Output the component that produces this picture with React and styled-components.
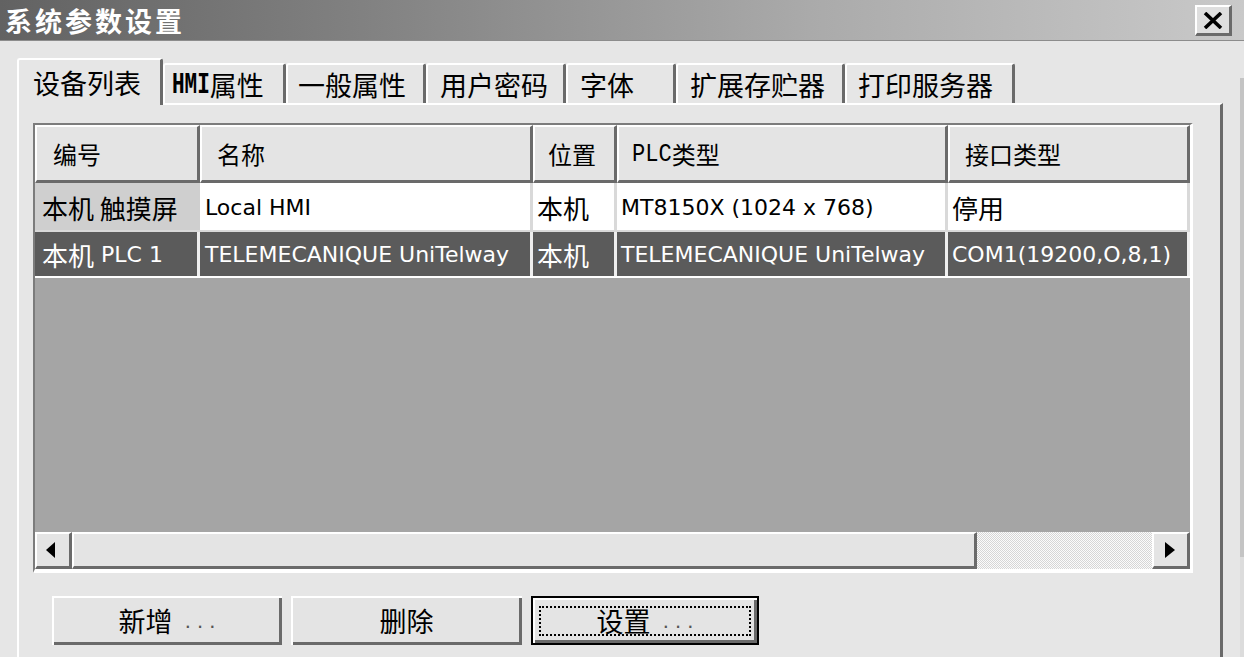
import React from 'react';
import styled, { createGlobalStyle } from 'styled-components';

const GlobalStyle = createGlobalStyle`
  html, body { margin: 0; padding: 0; background: #e6e6e6; overflow: hidden; }
  #root { width: 1244px; height: 657px; }
`;

const CJK = `"Noto Sans CJK SC", sans-serif`;
const LATIN = `"DejaVu Sans", "Noto Sans CJK SC", sans-serif`;
const MONO = `"Liberation Mono", "Noto Sans CJK SC", monospace`;

const Window = styled.div`
  width: 1244px;
  height: 657px;
  display: flex;
  flex-direction: column;
  background: #e6e6e6;
  overflow: hidden;
  font-family: ${LATIN};
  color: #000;
`;

const TitleBar = styled.div`
  box-sizing: border-box;
  height: 41px;
  flex: none;
  display: flex;
  align-items: center;
  justify-content: space-between;
  padding: 0 12px 0 5px;
  background: linear-gradient(to right, #626262 0%, #828282 30%, #aaaaaa 65%, #c9c9c9 100%);
  box-shadow: inset 0 -1px 0 #8c8c8c;
`;

const Title = styled.div`
  font-family: ${CJK};
  font-weight: 700;
  font-size: 27px;
  letter-spacing: 3px;
  line-height: 39px;
  color: #fff;
`;

const CloseButton = styled.div`
  box-sizing: border-box;
  width: 37px;
  height: 31px;
  display: flex;
  align-items: center;
  justify-content: center;
  background: #dedede;
  border-top: 2px solid #fff;
  border-left: 2px solid #fff;
  border-right: 3px solid #6a6a6a;
  border-bottom: 3px solid #6a6a6a;
`;

const Main = styled.div`
  flex: 1;
  display: flex;
  min-height: 0;
`;

const Content = styled.div`
  flex: 1;
  padding: 17px 17px 0 17px;
  display: flex;
  flex-direction: column;
`;

const RightEdge = styled.div`
  width: 4px;
  flex: none;
  background: linear-gradient(to bottom, #e6e6e6 0 37px, #c4c4c4 37px 516px, #dcdcdc 516px);
`;

const TabRow = styled.div`
  height: 45px;
  flex: none;
  display: flex;
  align-items: flex-end;
`;

const Tab = styled.div`
  box-sizing: border-box;
  width: ${p => p.$w}px;
  height: ${p => (p.$active ? 47 : 40)}px;
  margin-bottom: ${p => (p.$active ? -2 : 0)}px;
  padding-left: ${p => p.$pad}px;
  padding-top: ${p => (p.$active ? 7 : 4)}px;
  display: flex;
  align-items: flex-start;
  background: #e6e6e6;
  border-top: 2px solid #fff;
  border-left: 2px solid #fff;
  border-right: 3px solid #6a6a6a;
  border-radius: 3px 3px 0 0;
  position: relative;
  z-index: ${p => (p.$active ? 2 : 1)};
  font-family: ${CJK};
  font-size: 27px;
  line-height: 32px;
  white-space: nowrap;
`;

/* Condensed bitmap-like Latin (e.g. "HMI", "PLC") next to CJK text */
const Narrow = styled.span`
  display: inline-block;
  font-family: ${MONO};
  font-size: ${p => p.$size}px;
  font-weight: ${p => p.$weight || 400};
  transform: scaleX(${p => p.$scale});
  transform-origin: left center;
  margin-right: ${p => -(p.$size * 0.6 * p.$chars * (1 - p.$scale)).toFixed(1)}px;
`;

const Panel = styled.div`
  box-sizing: border-box;
  height: 620px;
  flex: none;
  border-top: 2px solid #fff;
  border-left: 2px solid #fff;
  border-right: 3px solid #6a6a6a;
  padding: 18px 0 0 14px;
  background: #e6e6e6;
`;

const List = styled.div`
  box-sizing: border-box;
  width: 1160px;
  height: 450px;
  display: flex;
  flex-direction: column;
  border-top: 2px solid #7c7c7c;
  border-left: 2px solid #7c7c7c;
  border-right: 3px solid #fff;
  border-bottom: 4px solid #fff;
  background: #a5a5a5;
`;

const COLS = [
  { w: 165, head: '编号', hpad: 16, pad: 7 },
  { w: 333, head: '名称', hpad: 15, pad: 5 },
  { w: 84, head: '位置', hpad: 13, pad: 4 },
  {
    w: 331,
    head: [<Narrow key="p" $size={26} $scale={0.85} $chars={3}>PLC</Narrow>, '类型'],
    hpad: 13,
    pad: 4,
  },
  { w: 242, head: '接口类型', hpad: 15, pad: 4 },
];
const GRID = COLS.map(c => `${c.w}px`).join(' ');

const HeaderRow = styled.div`
  display: grid;
  grid-template-columns: ${GRID};
  height: 58px;
  flex: none;
`;

const HeadCell = styled.div`
  box-sizing: border-box;
  display: flex;
  align-items: center;
  padding-left: ${p => p.$pad}px;
  background: #e4e4e4;
  border-top: 2px solid #fff;
  border-left: 2px solid #fff;
  border-right: 3px solid #6a6a6a;
  border-bottom: 3px solid #6a6a6a;
  font-family: ${CJK};
  font-size: 24px;
  line-height: 30px;
  white-space: nowrap;
  overflow: hidden;
`;

const TONES = {
  fixed: { bg: '#cfcfcf', fg: '#000', line: '#cfcfcf' },
  plain: { bg: '#fff', fg: '#000', line: '#d9d9d9' },
  selected: { bg: '#5b5b5b', fg: '#fff', line: '#eeeeee' },
};

const Row = styled.div`
  box-sizing: border-box;
  display: grid;
  grid-template-columns: ${GRID};
  height: ${p => p.$h}px;
  flex: none;
  border-bottom: 2px solid ${p => p.$line};
`;

const Cell = styled.div`
  box-sizing: border-box;
  display: flex;
  align-items: center;
  padding-left: ${p => p.$pad}px;
  padding-top: 2px;
  background: ${p => TONES[p.$tone].bg};
  color: ${p => TONES[p.$tone].fg};
  border-right: 3px solid ${p => TONES[p.$tone].line};
  font-family: ${LATIN};
  font-size: 22px;
  line-height: 30px;
  white-space: pre;
  overflow: hidden;
`;

const Han = styled.span`
  font-family: ${CJK};
  font-size: ${p => p.$size || 26}px;
`;

const Empty = styled.div`
  flex: 1;
  background: #a5a5a5;
`;

const ScrollBar = styled.div`
  height: 37px;
  flex: none;
  display: flex;
`;

const Raised = styled.div`
  box-sizing: border-box;
  width: ${p => p.$w}px;
  flex: none;
  display: flex;
  align-items: center;
  justify-content: center;
  background: #e4e4e4;
  border-top: 2px solid #fff;
  border-left: 2px solid #fff;
  border-right: 3px solid #6a6a6a;
  border-bottom: 3px solid #6a6a6a;
`;

const Track = styled.div`
  flex: 1;
  background: repeating-conic-gradient(#d6d6d6 0 25%, #fbfbfb 0 50%) 0 0 / 2px 2px;
`;

const ButtonRow = styled.div`
  display: flex;
  gap: 9px;
  margin: 23px 0 0 19px;
`;

const Button = styled.div`
  box-sizing: border-box;
  width: ${p => p.$w}px;
  height: 49px;
  display: flex;
  background: #e4e4e4;
  border: ${p => (p.$default ? '2px solid #000' : 'none')};
  box-shadow: inset 2px 2px 0 #fff, inset -3px -3px 0 #6a6a6a;
  padding: ${p => (p.$default ? '8px 6px 7px 6px' : '0')};
`;

const ButtonLabel = styled.div`
  box-sizing: border-box;
  flex: 1;
  display: flex;
  align-items: center;
  justify-content: center;
  border: ${p => (p.$focus ? '2px dotted #000' : 'none')};
  font-family: ${LATIN};
  font-size: 22px;
  line-height: 30px;
  white-space: pre;
`;

const Dots = styled.span`
  color: #555;
  font-family: "Liberation Sans", sans-serif;
  font-size: 22px;
`;

const TABS = [
  { w: 146, pad: 14, label: '设备列表', active: true },
  {
    w: 123,
    pad: 7,
    label: [
      <Narrow key="h" $size={30} $scale={0.7} $chars={3} $weight={700}>HMI</Narrow>,
      '属性',
    ],
  },
  { w: 140, pad: 10, label: '一般属性' },
  { w: 140, pad: 12, label: '用户密码' },
  { w: 110, pad: 12, label: '字体' },
  { w: 169, pad: 12, label: '扩展存贮器' },
  { w: 170, pad: 11, label: '打印服务器' },
];

const ROWS = [
  {
    h: 49,
    line: '#d9d9d9',
    cells: [
      { tone: 'fixed', v: <Han>本机 触摸屏</Han> },
      { tone: 'plain', v: 'Local HMI' },
      { tone: 'plain', v: <Han>本机</Han> },
      { tone: 'plain', v: 'MT8150X (1024 x 768)' },
      { tone: 'plain', v: <Han>停用</Han> },
    ],
  },
  {
    h: 46,
    line: '#ffffff',
    cells: [
      { tone: 'selected', v: <><Han>本机</Han> PLC 1</> },
      { tone: 'selected', v: 'TELEMECANIQUE UniTelway' },
      { tone: 'selected', v: <Han>本机</Han> },
      { tone: 'selected', v: 'TELEMECANIQUE UniTelway' },
      { tone: 'selected', v: 'COM1(19200,O,8,1)' },
    ],
  },
];

const BUTTONS = [
  { w: 230, label: '新增', dots: true },
  { w: 231, label: '删除' },
  { w: 228, label: '设置', dots: true, isDefault: true },
];

const CloseIcon = () => (
  <svg width="22" height="17" viewBox="0 0 22 17">
    <path d="M3 1 L19 16 M19 1 L3 16" stroke="#000" strokeWidth="3.6" fill="none" />
  </svg>
);

const ArrowLeft = () => (
  <svg width="9" height="16" viewBox="0 0 9 16" style={{ marginLeft: -6 }}>
    <path d="M9 0 L0 8 L9 16 Z" fill="#000" />
  </svg>
);

const ArrowRight = () => (
  <svg width="10" height="16" viewBox="0 0 10 16" style={{ marginLeft: -2 }}>
    <path d="M0 0 L10 8 L0 16 Z" fill="#000" />
  </svg>
);

export default function App() {
  return (
    <>
      <GlobalStyle />
      <Window>
        <TitleBar>
          <Title>系统参数设置</Title>
          <CloseButton>
            <CloseIcon />
          </CloseButton>
        </TitleBar>
        <Main>
          <Content>
            <TabRow>
              {TABS.map((t, i) => (
                <Tab key={i} $w={t.w} $pad={t.pad} $active={t.active}>
                  {t.label}
                </Tab>
              ))}
            </TabRow>
            <Panel>
              <List>
                <HeaderRow>
                  {COLS.map((c, i) => (
                    <HeadCell key={i} $pad={c.hpad}>{c.head}</HeadCell>
                  ))}
                </HeaderRow>
                {ROWS.map((r, ri) => (
                  <Row key={ri} $h={r.h} $line={r.line}>
                    {r.cells.map((c, ci) => (
                      <Cell key={ci} $tone={c.tone} $pad={COLS[ci].pad}>
                        {c.v}
                      </Cell>
                    ))}
                  </Row>
                ))}
                <Empty />
                <ScrollBar>
                  <Raised $w={37}>
                    <ArrowLeft />
                  </Raised>
                  <Raised $w={905} />
                  <Track />
                  <Raised $w={38}>
                    <ArrowRight />
                  </Raised>
                </ScrollBar>
              </List>
              <ButtonRow>
                {BUTTONS.map((b, i) => (
                  <Button key={i} $w={b.w} $default={b.isDefault}>
                    <ButtonLabel $focus={b.isDefault}>
                      <Han $size={27}>{b.label}</Han>
                      {b.dots && <Dots>{'  . . .'}</Dots>}
                    </ButtonLabel>
                  </Button>
                ))}
              </ButtonRow>
            </Panel>
          </Content>
          <RightEdge />
        </Main>
      </Window>
    </>
  );
}
